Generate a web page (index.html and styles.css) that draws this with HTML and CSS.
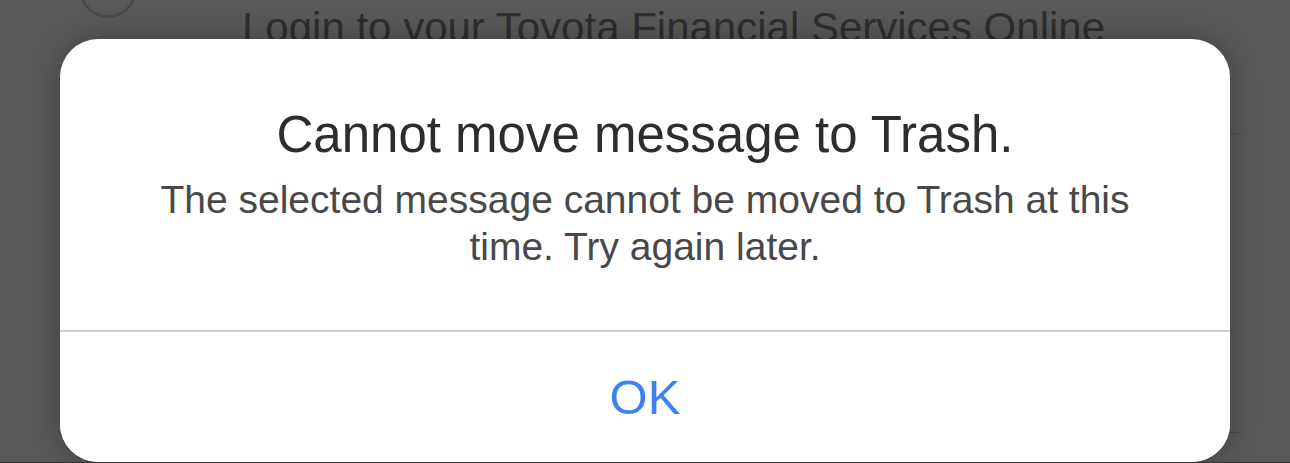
FILE: index.html
```html
<!DOCTYPE html>
<html lang="en">
<head>
  <meta charset="UTF-8">
  <meta name="viewport" content="width=device-width, initial-scale=1.0">
  <title>Cannot move message to Trash</title>
  <link rel="stylesheet" href="styles.css">
</head>
<body>
  <div class="inbox">
    <div class="mail-row first">
      <span class="select-circle"></span>
      <div class="mail-text">Login to your Toyota Financial Services Online</div>
    </div>
    <div class="separator"></div>
    <div class="mail-row second"></div>
    <div class="separator"></div>
  </div>

  <div class="alert">
    <div class="alert-message">
      <h2>Cannot move message to Trash.</h2>
      <p>The selected message cannot be moved to Trash at this time. Try again later.</p>
    </div>
    <button type="button" class="alert-button">OK</button>
  </div>

  <div class="bottom-edge"></div>
</body>
</html>
```

FILE: styles.css
```css
body {
  font-family: "Liberation Sans", Arial, sans-serif;
  background-color: #595959;
  margin: 0;
  height: 463px;
  overflow: hidden;
  position: relative;
}
.inbox {
  margin-top: -50px;
}
.mail-row.first {
  height: 183px;
  display: flex;
  align-items: flex-start;
}
.mail-row.second {
  height: 298px;
}
.separator {
  height: 1px;
  margin: 0 48px 0 242px;
  background-color: #4c4c4c;
}
.select-circle {
  width: 52px;
  height: 52px;
  border: 3px solid #4b4b4b;
  border-radius: 50%;
  margin: 10px 0 0 79px;
  flex-shrink: 0;
}
.mail-text {
  margin: 54px 0 0 105px;
  font-size: 42px;
  line-height: 48px;
  color: #2e2e2e;
  white-space: nowrap;
}
.alert {
  position: absolute;
  left: 60px;
  top: 39px;
  width: 1170px;
  height: 423px;
  background-color: white;
  border-radius: 38px;
  box-shadow: 0 0 28px rgba(0, 0, 0, 0.28);
  display: flex;
  flex-direction: column;
  overflow: hidden;
}
.alert-message {
  height: 293px;
  box-sizing: border-box;
  padding: 66px 80px 0;
  text-align: center;
  border-bottom: 2px solid #d2d2d2;
}
.alert-message h2 {
  margin: 0;
  font-size: 51px;
  line-height: 60px;
  font-weight: normal;
  color: #2d2d2d;
}
.alert-message p {
  margin: 11px 0 0;
  font-size: 39px;
  line-height: 47px;
  color: #484848;
}
.alert-button {
  flex: 1;
  border: none;
  background: white;
  font-family: inherit;
  font-size: 49px;
  line-height: 130px;
  padding: 0;
  color: #3d82f2;
  cursor: pointer;
}
.bottom-edge {
  position: absolute;
  left: 0;
  right: 0;
  bottom: 0;
  height: 1px;
  background-color: #333;
}
```
